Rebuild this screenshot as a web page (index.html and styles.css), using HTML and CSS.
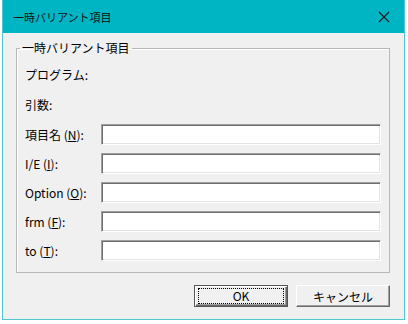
FILE: index.html
```html
<!DOCTYPE html>
<html>
<head>
  <link rel="stylesheet" href="styles.css">
</head>
<body>
  <div class="window">
    <div class="titlebar">
      <span class="title">一時バリアント項目</span>
      <svg class="close" width="12" height="12" viewBox="0 0 12 12">
        <path d="M1 1 L11 11 M11 1 L1 11" stroke="#1a1a1a" stroke-width="1.1" fill="none"/>
      </svg>
    </div>
    <div class="content">
      <fieldset class="group">
        <legend>一時バリアント項目</legend>
        <div class="info">プログラム:</div>
        <div class="info">引数:</div>
        <div class="field">
          <label>項目名 (<u>N</u>):</label>
          <div class="input"></div>
        </div>
        <div class="field">
          <label>I/E (<u>I</u>):</label>
          <div class="input"></div>
        </div>
        <div class="field">
          <label>Option (<u>O</u>):</label>
          <div class="input"></div>
        </div>
        <div class="field">
          <label>frm (<u>F</u>):</label>
          <div class="input"></div>
        </div>
        <div class="field">
          <label>to (<u>T</u>):</label>
          <div class="input"></div>
        </div>
      </fieldset>
      <div class="buttons">
        <div class="button default"><span class="focus">OK</span></div>
        <div class="button">キャンセル</div>
      </div>
    </div>
  </div>
</body>
</html>
```

FILE: styles.css
```css
body {
  margin: 0;
  background: #ffffff;
  font-family: "Noto Sans CJK JP", sans-serif;
  font-size: 12px;
  color: #000;
}
.window {
  margin-left: 2px;
  width: 401px;
  height: 319px;
  border: 1px solid #4fc8d1;
  border-top: none;
  background: #f0f0f0;
}
.titlebar {
  height: 33px;
  background: #00b5c3;
  display: flex;
  align-items: center;
  justify-content: space-between;
  padding: 0 14px 0 10px;
}
.title {
  font-size: 11px;
  color: #111;
}
.content {
  padding: 7px 14px 0 13px;
}
.group {
  margin: 0;
  padding: 0 0 11px 8px;
  border: 1px solid #b8b8b8;
  box-shadow: inset 1px 1px #fff;
}
.group legend {
  padding: 0 2px;
  margin-left: -5px;
  line-height: 16px;
}
.info {
  height: 30px;
  line-height: 30px;
}
.info:first-of-type {
  margin-top: 4px;
}
.field {
  display: flex;
  align-items: center;
  height: 21px;
  margin-top: 8px;
}
.info + .field {
  margin-top: 4px;
}
.field label {
  width: 76px;
}
.input {
  width: 278px;
  height: 19px;
  background: #fff;
  border: 1px solid;
  border-color: #a0a0a0 #fff #fff #a0a0a0;
  box-shadow: inset 1px 1px #6d6d6d, inset -1px -1px #e3e3e3;
}
.buttons {
  display: flex;
  justify-content: flex-end;
  gap: 8px;
  margin-top: 12px;
}
.button {
  width: 92px;
  height: 20px;
  display: flex;
  align-items: center;
  justify-content: center;
  background: #f0f0f0;
  border: 1px solid;
  border-color: #fff #696969 #696969 #fff;
  box-shadow: inset -1px -1px #a0a0a0;
}
.button.default {
  border: 1px solid #555;
  box-shadow: inset 1px 1px #fff, inset -1px -1px #696969, inset -2px -2px #a0a0a0;
  padding: 3px;
  width: 86px;
  height: 14px;
}
.focus {
  flex: 1;
  height: 14px;
  line-height: 14px;
  text-align: center;
  border: 1px dotted #000;
}
```
